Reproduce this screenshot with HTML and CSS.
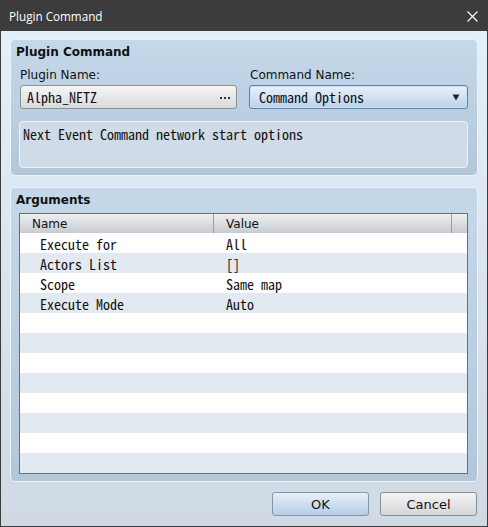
FILE: index.html
```html
<!DOCTYPE html>
<html>
<head>
<meta charset="utf-8">
<link rel="stylesheet" href="styles.css">
</head>
<body>
<div class="window">
  <div class="titlebar">
    <span class="title">Plugin Command</span>
    <svg class="close" width="11" height="11" viewBox="0 0 11 11"><path d="M0.5 0.5 L10.5 10.5 M10.5 0.5 L0.5 10.5" stroke="#ffffff" stroke-width="1.1" fill="none"/></svg>
  </div>
  <div class="content">
    <section class="group group-cmd">
      <h2 class="group-title">Plugin Command</h2>
      <div class="fields">
        <div class="field">
          <label class="label">Plugin Name:</label>
          <div class="picker"><span class="mono">Alpha_NETZ</span><svg class="dots" width="10" height="2" viewBox="0 0 10 2"><rect x="0" y="0" width="2" height="2" fill="#333"/><rect x="4" y="0" width="2" height="2" fill="#333"/><rect x="8" y="0" width="2" height="2" fill="#333"/></svg></div>
        </div>
        <div class="field">
          <label class="label">Command Name:</label>
          <div class="select"><span class="mono">Command Options</span><svg class="arrow" width="8" height="7" viewBox="0 0 8 7"><polygon points="0.5,0.5 7.5,0.5 4,6.5" fill="#222"/></svg></div>
        </div>
      </div>
      <div class="desc mono">Next Event Command network start options</div>
    </section>
    <section class="group group-args">
      <h2 class="group-title">Arguments</h2>
      <div class="table">
        <div class="thead">
          <div class="th th-name">Name</div>
          <div class="th th-value">Value</div>
          <div class="th th-pad"></div>
        </div>
        <div class="tbody">
          <div class="row"><span class="cell-name mono">Execute for</span><span class="cell-value mono">All</span></div>
          <div class="row"><span class="cell-name mono">Actors List</span><span class="cell-value mono">[]</span></div>
          <div class="row"><span class="cell-name mono">Scope</span><span class="cell-value mono">Same map</span></div>
          <div class="row"><span class="cell-name mono">Execute Mode</span><span class="cell-value mono">Auto</span></div>
          <div class="row"></div>
          <div class="row"></div>
          <div class="row"></div>
          <div class="row"></div>
          <div class="row"></div>
          <div class="row"></div>
          <div class="row"></div>
          <div class="row"></div>
        </div>
      </div>
    </section>
    <div class="buttons">
      <button class="btn btn-ok">OK</button>
      <button class="btn">Cancel</button>
    </div>
  </div>
</div>
</body>
</html>
```
FILE: styles.css
```css
html, body {
  margin: 0;
  padding: 0;
}
body {
  width: 488px;
  height: 527px;
  overflow: hidden;
  font-family: "DejaVu Sans", sans-serif;
  color: #111;
}
.window {
  width: 488px;
  height: 527px;
  box-sizing: border-box;
  display: flex;
  flex-direction: column;
  background: #3c3c3c;
}
.titlebar {
  height: 31px;
  flex: none;
  display: flex;
  align-items: center;
  justify-content: space-between;
  padding: 0 10px 0 9px;
  color: #ffffff;
  font-family: "Open Sans", sans-serif;
  font-size: 11.7px;
}
.close {
  display: block;
  margin-top: 1px;
}
.content {
  flex: 1;
  margin: 0 1px 1px 1px;
  background: linear-gradient(#e3effb, #cfdae5);
  padding: 8px 9px 10px 9px;
  display: flex;
  flex-direction: column;
}
.mono {
  font-family: "Noto Sans Mono CJK JP", "DejaVu Sans Mono", monospace;
  font-size: 14px;
}
.group {
  border: 1px solid #edf3f9;
  border-radius: 5px;
  background: linear-gradient(#c5d8ea, #b3c7db);
  padding: 4px 9px 7px 8px;
}
.group-cmd {
  margin-bottom: 11px;
}
.group-title {
  margin: 0 0 0 -3px;
  font-size: 12px;
  font-weight: bold;
  line-height: 17px;
  color: #111;
}
.fields {
  display: grid;
  grid-template-columns: 218px 219px;
  column-gap: 12px;
  margin-top: 6px;
}
.label {
  display: block;
  font-size: 12px;
  line-height: 16px;
  margin-bottom: 2px;
  padding-left: 1px;
}
.picker {
  margin-left: 1px;
  height: 24px;
  box-sizing: border-box;
  border: 1px solid #8d8f91;
  border-radius: 3px;
  background: linear-gradient(#f5f5f5, #d8d9da);
  display: flex;
  align-items: center;
  justify-content: space-between;
  padding: 0 6px 0 6px;
}
.dots {
  display: block;
  margin-top: 2px;
}
.select {
  height: 24px;
  box-sizing: border-box;
  border: 1px solid #5a80b0;
  border-radius: 3px;
  box-shadow: inset 0 0 0 1px #cfe0f1;
  background: linear-gradient(#e8f2fb, #b9d1ea);
  display: flex;
  align-items: center;
  justify-content: space-between;
  padding: 0 7px 0 9px;
}
.arrow {
  display: block;
}
.desc {
  margin-top: 12px;
  height: 47px;
  box-sizing: border-box;
  border: 1px solid #eef3f8;
  border-radius: 4px;
  background: #cfdbe7;
  padding: 3px 3px;
  line-height: 18px;
}
.table {
  margin-top: 4px;
  height: 261px;
  box-sizing: border-box;
  border: 1px solid #6b6e72;
  background: #ffffff;
}
.thead {
  display: flex;
  height: 19px;
  background: linear-gradient(#eeeeee, #c8ccd1);
}
.th {
  box-sizing: border-box;
  font-size: 12px;
  line-height: 20px;
  padding-left: 12px;
  border-right: 1px solid #9a9da1;
}
.th-name {
  width: 194px;
}
.th-value {
  width: 238px;
}
.th-pad {
  flex: 1;
  border-right: none;
}
.row {
  display: flex;
  height: 20px;
  line-height: 22px;
  background: #ffffff;
}
.row:nth-child(even) {
  background: #e3e9f0;
}
.cell-name {
  width: 194px;
  box-sizing: border-box;
  padding-left: 20px;
}
.cell-value {
  padding-left: 12px;
}
.buttons {
  display: flex;
  justify-content: flex-end;
  gap: 11px;
  margin-top: 10px;
  padding-right: 1px;
}
.btn {
  width: 97px;
  height: 24px;
  box-sizing: border-box;
  border: 1px solid #8a8d91;
  border-radius: 3px;
  background: linear-gradient(#f4f4f4, #d5d6d8);
  font-family: "DejaVu Sans", sans-serif;
  font-size: 13px;
  color: #111;
  padding: 0;
}
.btn-ok {
  border-color: #7f97b3;
  background: linear-gradient(#e6f0fa, #b6cde6);
}
```
